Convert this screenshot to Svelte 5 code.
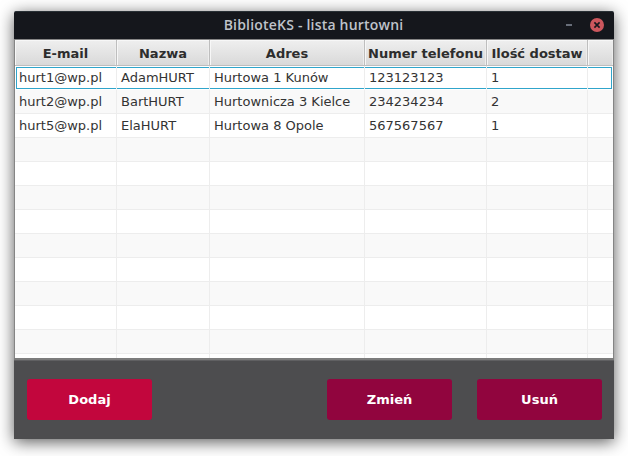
<script>
  const columns = [
    { title: 'E-mail', key: 'email', width: 102 },
    { title: 'Nazwa', key: 'name', width: 93 },
    { title: 'Adres', key: 'address', width: 155 },
    { title: 'Numer telefonu', key: 'phone', width: 122 },
    { title: 'Ilość dostaw', key: 'count', width: 101 },
    { title: '', key: 'filler', width: 25 }
  ];
  const suppliers = [
    { email: 'hurt1@wp.pl', name: 'AdamHURT', address: 'Hurtowa 1 Kunów', phone: '123123123', count: '1' },
    { email: 'hurt2@wp.pl', name: 'BartHURT', address: 'Hurtownicza 3 Kielce', phone: '234234234', count: '2' },
    { email: 'hurt5@wp.pl', name: 'ElaHURT', address: 'Hurtowa 8 Opole', phone: '567567567', count: '1' }
  ];
  const rows = [...suppliers, ...Array.from({ length: 10 }, () => ({}))];
</script>

<main class="desktop">
  <section class="window">
    <header class="titlebar">
      <span></span>
      <h1>BiblioteKS - lista hurtowni</h1>
      <div class="controls">
        <i class="minimize"></i>
        <svg class="close" width="14" height="14" viewBox="0 0 14 14">
          <circle cx="7" cy="7" r="7" fill="#cc575d" />
          <path d="M4.4 4.4l5.2 5.2M9.6 4.4l-5.2 5.2" stroke="#15171c" stroke-width="1.6" />
        </svg>
      </div>
    </header>

    <div class="table">
      <div class="row head">
        {#each columns as column}
          <div class="th" style:width="{column.width}px">{column.title}</div>
        {/each}
      </div>
      {#each rows as row, index}
        <div class="row body" class:odd={index % 2 === 1} class:focused={index === 0}>
          {#each columns as column}
            <div class="td" style:width="{column.width}px">{row[column.key] ?? ''}</div>
          {/each}
        </div>
      {/each}
    </div>

    <footer class="toolbar">
      <button class="add">Dodaj</button>
      <div class="group">
        <button>Zmień</button>
        <button>Usuń</button>
      </div>
    </footer>
  </section>
</main>

<style>
  .desktop {
    box-sizing: border-box;
    width: 628px;
    height: 456px;
    padding: 11px 14px 17px;
    overflow: hidden;
    background: #fff;
    font-family: "DejaVu Sans", sans-serif;
  }
  .window {
    width: 600px;
    height: 428px;
    display: flex;
    flex-direction: column;
    border-radius: 2px 2px 0 0;
    box-shadow: 0 3px 16px rgba(0, 0, 0, 0.65);
  }
  .titlebar {
    box-sizing: border-box;
    height: 28px;
    flex: none;
    display: grid;
    grid-template-columns: 1fr auto 1fr;
    align-items: center;
    padding-right: 10px;
    background: #15171c;
    border-top: 1px solid #293035;
    border-radius: 2px 2px 0 0;
  }
  h1 {
    margin: 0 0 2px 9px;
    color: #bfc3ca;
    font: 600 14px/25px "Open Sans", "Noto Sans", sans-serif;
    letter-spacing: 0.2px;
    white-space: nowrap;
  }
  .controls {
    display: flex;
    align-items: center;
    justify-content: flex-end;
    gap: 18px;
    margin-bottom: 1px;
  }
  .minimize {
    width: 6px;
    height: 2px;
    background: #686e79;
  }
  .close {
    display: block;
  }
  .table {
    box-sizing: border-box;
    height: 319px;
    flex: none;
    overflow: hidden;
    background: #fff;
    border: 1px solid #858585;
    border-bottom: 0;
  }
  .row {
    display: flex;
    position: relative;
  }
  .th {
    box-sizing: border-box;
    height: 26px;
    flex: none;
    padding-top: 1px;
    border-right: 1px solid #bebebe;
    border-bottom: 1px solid #bebebe;
    box-shadow: inset 1px 1px 0 #f7f7f7, inset -1px 0 0 #ededed;
    background: linear-gradient(#efefef, #d9d9d9);
    color: #2d2d2d;
    font-size: 13px;
    font-weight: 700;
    line-height: 26px;
    text-align: center;
    white-space: nowrap;
  }
  .body {
    height: 24px;
    background: #fff;
  }
  .body.odd {
    background: #f9f9f9;
  }
  .td {
    box-sizing: border-box;
    position: relative;
    height: 24px;
    flex: none;
    padding-left: 4px;
    border-right: 1px solid #ededed;
    border-bottom: 1px solid #ededed;
    color: #333;
    font-size: 13px;
    line-height: 23px;
    white-space: nowrap;
  }
  .th:last-child,
  .td:last-child {
    border-right: 0;
  }
  .focused .td {
    border-bottom-color: transparent;
  }
  .focused::before {
    content: "";
    position: absolute;
    inset: 1px;
    border: 1px solid #30a5cb;
  }
  .toolbar {
    box-sizing: border-box;
    flex: 1;
    display: flex;
    justify-content: space-between;
    align-items: flex-start;
    padding: 19px 12px 0 13px;
    border-top: 2px solid #7d7d7d;
    background: #4d4d4f;
    box-shadow: inset 0 1px 0 #606062;
  }
  .group {
    display: flex;
    gap: 25px;
  }
  button {
    width: 125px;
    height: 41px;
    padding: 0;
    border: 0;
    border-radius: 3px;
    background: #91053e;
    color: #fff;
    font: 700 13px/41px "DejaVu Sans", sans-serif;
  }
  .add {
    background: #c2063d;
  }
</style>
